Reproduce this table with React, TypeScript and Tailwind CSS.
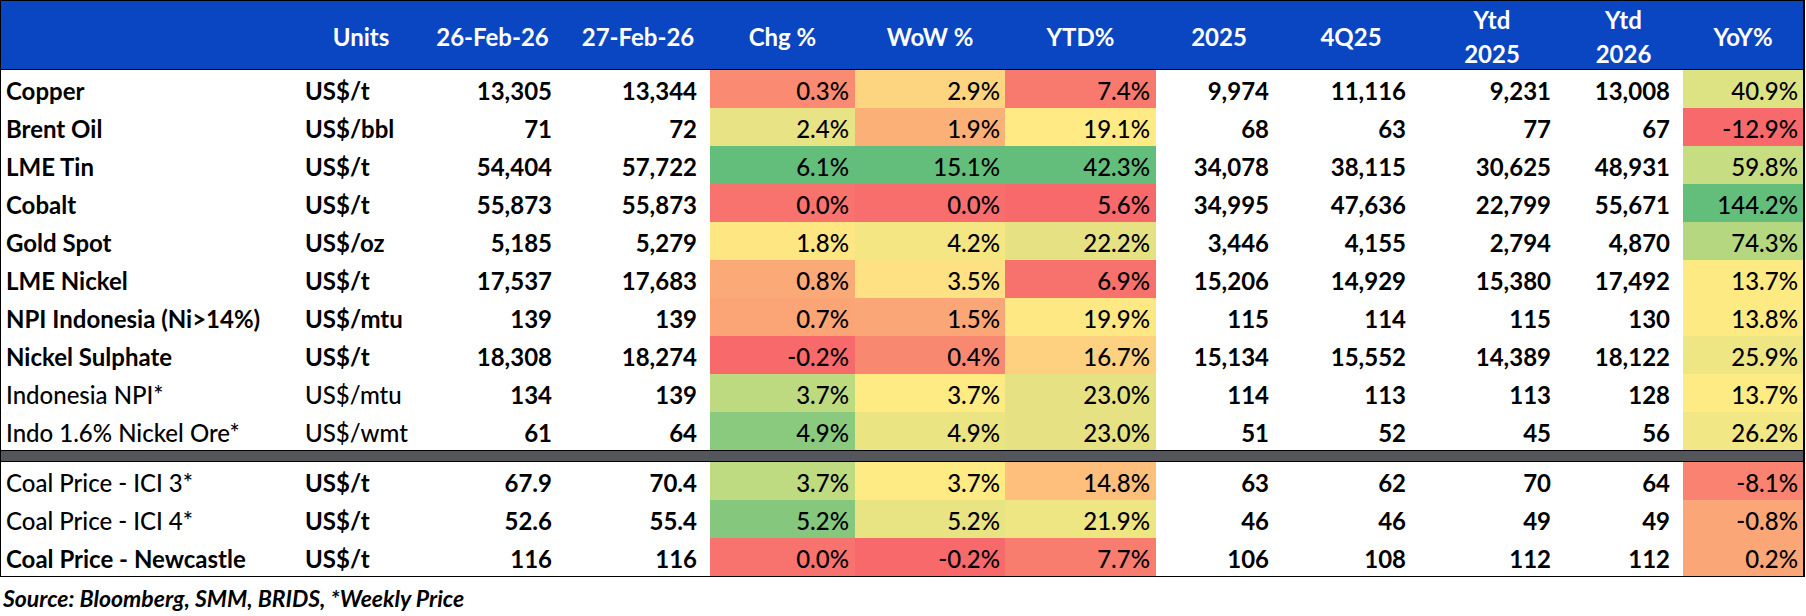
import React from 'react';

type Row = {
  name: string;
  unit: string;
  boldName: boolean;
  boldUnit: boolean;
  vals: [string, string];
  pct: [string, string, string];
  pctBg: [string, string, string];
  hist: [string, string, string, string];
  yoy: string;
  yoyBg: string;
};

const metals: Row[] = [
  { name: 'Copper', unit: 'US$/t', boldName: true, boldUnit: true, vals: ['13,305', '13,344'], pct: ['0.3%', '2.9%', '7.4%'], pctBg: ['bg-[#fa8b72]', 'bg-[#fdd580]', 'bg-[#f87a6e]'], hist: ['9,974', '11,116', '9,231', '13,008'], yoy: '40.9%', yoyBg: 'bg-[#dde283]' },
  { name: 'Brent Oil', unit: 'US$/bbl', boldName: true, boldUnit: true, vals: ['71', '72'], pct: ['2.4%', '1.9%', '19.1%'], pctBg: ['bg-[#e8e384]', 'bg-[#fbb077]', 'bg-[#ffea84]'], hist: ['68', '63', '77', '67'], yoy: '-12.9%', yoyBg: 'bg-[#f8696b]' },
  { name: 'LME Tin', unit: 'US$/t', boldName: true, boldUnit: true, vals: ['54,404', '57,722'], pct: ['6.1%', '15.1%', '42.3%'], pctBg: ['bg-[#63be7b]', 'bg-[#63be7b]', 'bg-[#63be7b]'], hist: ['34,078', '38,115', '30,625', '48,931'], yoy: '59.8%', yoyBg: 'bg-[#c7dd81]' },
  { name: 'Cobalt', unit: 'US$/t', boldName: true, boldUnit: true, vals: ['55,873', '55,873'], pct: ['0.0%', '0.0%', '5.6%'], pctBg: ['bg-[#f8736d]', 'bg-[#f86e6c]', 'bg-[#f8696b]'], hist: ['34,995', '47,636', '22,799', '55,671'], yoy: '144.2%', yoyBg: 'bg-[#63be7b]' },
  { name: 'Gold Spot', unit: 'US$/oz', boldName: true, boldUnit: true, vals: ['5,185', '5,279'], pct: ['1.8%', '4.2%', '22.2%'], pctBg: ['bg-[#fee782]', 'bg-[#f4e783]', 'bg-[#e6e283]'], hist: ['3,446', '4,155', '2,794', '4,870'], yoy: '74.3%', yoyBg: 'bg-[#b4d780]' },
  { name: 'LME Nickel', unit: 'US$/t', boldName: true, boldUnit: true, vals: ['17,537', '17,683'], pct: ['0.8%', '3.5%', '6.9%'], pctBg: ['bg-[#fbaa77]', 'bg-[#fde182]', 'bg-[#f8726d]'], hist: ['15,206', '14,929', '15,380', '17,492'], yoy: '13.7%', yoyBg: 'bg-[#feea83]' },
  { name: 'NPI Indonesia (Ni>14%)', unit: 'US$/mtu', boldName: true, boldUnit: true, vals: ['139', '139'], pct: ['0.7%', '1.5%', '19.9%'], pctBg: ['bg-[#fba476]', 'bg-[#fba677]', 'bg-[#fee883]'], hist: ['115', '114', '115', '130'], yoy: '13.8%', yoyBg: 'bg-[#feea83]' },
  { name: 'Nickel Sulphate', unit: 'US$/t', boldName: true, boldUnit: true, vals: ['18,308', '18,274'], pct: ['-0.2%', '0.4%', '16.7%'], pctBg: ['bg-[#f8696b]', 'bg-[#f98871]', 'bg-[#fdd17f]'], hist: ['15,134', '15,552', '14,389', '18,122'], yoy: '25.9%', yoyBg: 'bg-[#eee683]' },
  { name: 'Indonesia NPI*', unit: 'US$/mtu', boldName: false, boldUnit: false, vals: ['134', '139'], pct: ['3.7%', '3.7%', '23.0%'], pctBg: ['bg-[#beda80]', 'bg-[#ffeb84]', 'bg-[#e6e283]'], hist: ['114', '113', '113', '128'], yoy: '13.7%', yoyBg: 'bg-[#ffeb84]' },
  { name: 'Indo 1.6% Nickel Ore*', unit: 'US$/wmt', boldName: false, boldUnit: false, vals: ['61', '64'], pct: ['4.9%', '4.9%', '23.0%'], pctBg: ['bg-[#8aca7e]', 'bg-[#eae483]', 'bg-[#e6e283]'], hist: ['51', '52', '45', '56'], yoy: '26.2%', yoyBg: 'bg-[#f1e784]' },
];

const coal: Row[] = [
  { name: 'Coal Price - ICI 3*', unit: 'US$/t', boldName: false, boldUnit: true, vals: ['67.9', '70.4'], pct: ['3.7%', '3.7%', '14.8%'], pctBg: ['bg-[#bfdb81]', 'bg-[#ffeb84]', 'bg-[#fdbf7b]'], hist: ['63', '62', '70', '64'], yoy: '-8.1%', yoyBg: 'bg-[#f98370]' },
  { name: 'Coal Price - ICI 4*', unit: 'US$/t', boldName: false, boldUnit: true, vals: ['52.6', '55.4'], pct: ['5.2%', '5.2%', '21.9%'], pctBg: ['bg-[#84c77d]', 'bg-[#e8e383]', 'bg-[#eee583]'], hist: ['46', '46', '49', '49'], yoy: '-0.8%', yoyBg: 'bg-[#faa676]' },
  { name: 'Coal Price - Newcastle', unit: 'US$/t', boldName: true, boldUnit: true, vals: ['116', '116'], pct: ['0.0%', '-0.2%', '7.7%'], pctBg: ['bg-[#f8736d]', 'bg-[#f8696b]', 'bg-[#f87d6e]'], hist: ['106', '108', '112', '112'], yoy: '0.2%', yoyBg: 'bg-[#faa676]' },
];

// right padding of each numeric column, as in the sheet
const valPad = ['pr-[14px]', 'pr-[13px]'];
const pctPad = ['pr-[6px]', 'pr-[5px]', 'pr-[6px]'];
const histPad = ['pr-[13px]', 'pr-[14px]', 'pr-[13px]', 'pr-[13px]'];

const cell = 'h-[38px] pt-[4px] leading-[34px] whitespace-nowrap';

function DataRow({ r }: { r: Row }) {
  return (
    <>
      <div className={`${cell} pl-[5px] ${r.boldName ? 'font-bold' : 'font-medium'}`}>{r.name}</div>
      <div className={`${cell} pl-[2px] ${r.boldUnit ? 'font-bold' : 'font-medium'}`}>{r.unit}</div>
      {r.vals.map((v, i) => (
        <div key={'v' + i} className={`${cell} text-right font-bold ${valPad[i]}`}>{v}</div>
      ))}
      {r.pct.map((v, i) => (
        <div key={'p' + i} className={`${cell} text-right font-medium ${r.pctBg[i]} ${pctPad[i]}`}>{v}</div>
      ))}
      {r.hist.map((v, i) => (
        <div key={'h' + i} className={`${cell} text-right font-bold ${histPad[i]}`}>{v}</div>
      ))}
      <div className={`${cell} text-right font-medium pr-[5px] ${r.yoyBg}`}>{r.yoy}</div>
    </>
  );
}

export default function App() {
  const heads = ['', 'Units', '26-Feb-26', '27-Feb-26', 'Chg %', 'WoW %', 'YTD%', '2025', '4Q25', 'Ytd\n2025', 'Ytd\n2026', 'YoY%'];

  return (
    <div className="w-[1806px] h-[616px] bg-white text-black font-['Lato',sans-serif] text-[24px]">
      <div className="w-[1805px] border-t border-l border-b border-r-2 border-black">
        <div className="grid grid-cols-[302px_116px_147px_144px_145px_150px_151px_126px_138px_144px_119px_120px]">
          {/* header */}
          {heads.map((h, i) => (
            <div
              key={i}
              className="h-[69px] bg-[#0a46c2] text-white font-bold flex items-center justify-center text-center pt-[4px] leading-[34px] whitespace-pre-line border-b border-black"
            >
              {h}
            </div>
          ))}

          {metals.map(r => <DataRow key={r.name} r={r} />)}

          {/* divider */}
          <div className="col-span-full h-[12px] bg-[#53565a] border-y border-black"></div>

          {coal.map(r => <DataRow key={r.name} r={r} />)}
        </div>
      </div>
      <div className="pt-[8px] pl-[3px] leading-[26px] text-[23px] font-bold italic">
        Source: Bloomberg, SMM, BRIDS, *Weekly Price
      </div>
    </div>
  );
}
